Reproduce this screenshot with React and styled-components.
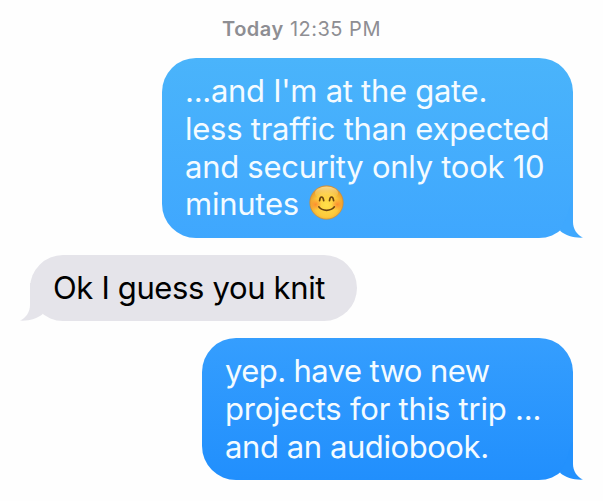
import React from 'react';
import styled, { createGlobalStyle } from 'styled-components';

const GlobalStyle = createGlobalStyle`
  body {
    margin: 0;
    background: #fefefe;
    font-family: Inter, 'Liberation Sans', sans-serif;
  }
`;

const Conversation = styled.main`
  display: flex;
  flex-direction: column;
  box-sizing: border-box;
  width: 603px;
  height: 501px;
  padding: 17px 30px 0;
  overflow: hidden;
`;

const Timestamp = styled.div`
  align-self: center;
  height: 41px;
  line-height: 25px;
  font-size: 20px;
  letter-spacing: 0.5px;
  color: #8e8e93;
`;

const Day = styled.span`
  font-weight: 600;
`;

const Bubble = styled.div`
  position: relative;
  box-sizing: border-box;
  align-self: ${props => (props.$sent ? 'flex-end' : 'flex-start')};
  width: ${props => props.$width}px;
  height: ${props => props.$height}px;
  margin-bottom: 17px;
  padding: 14px 0 0 23px;
  border-radius: 34px;
  background: ${props => props.$fill};
  color: ${props => (props.$sent ? '#f4fbff' : '#000')};
`;

const Line = styled.div`
  height: 37.8px;
  line-height: 37.8px;
  font-size: 31px;
  letter-spacing: ${props => props.$spacing || 0}px;
  font-variant-ligatures: none;
  white-space: nowrap;
`;

const TailShape = styled.svg`
  position: absolute;
  bottom: 0;
  ${props => (props.$sent ? 'right: -10px;' : 'left: -10px; transform: scaleX(-1);')}
`;

const Smiley = styled.svg`
  vertical-align: -5px;
  margin-left: 2px;
`;

const Tail = ({ sent, color }) => (
  <TailShape $sent={sent} width="30" height="40" viewBox="0 0 30 40">
    <path d="M14 18L19 2H20V24C20 31 24 37 30 39.6C21 40 13 38 7 32.8Z" fill={color} />
  </TailShape>
);

const BlushEmoji = () => (
  <Smiley width="35" height="35" viewBox="0 0 35 35">
    <defs>
      <radialGradient id="face" cx="50%" cy="58%" r="54%">
        <stop offset="0" stopColor="#ffe04a" />
        <stop offset="0.65" stopColor="#fdc93b" />
        <stop offset="1" stopColor="#e79a2b" />
      </radialGradient>
      <radialGradient id="cheek">
        <stop offset="0" stopColor="#fb7b2c" stopOpacity="0.75" />
        <stop offset="1" stopColor="#fb7b2c" stopOpacity="0" />
      </radialGradient>
      <linearGradient id="shine" x1="0" y1="0" x2="0" y2="1">
        <stop offset="0" stopColor="#fff0b0" stopOpacity="0.75" />
        <stop offset="1" stopColor="#ffd95a" stopOpacity="0" />
      </linearGradient>
    </defs>
    <circle cx="17.5" cy="17.5" r="16.7" fill="url(#face)" stroke="#c98a3c" strokeWidth="0.7" />
    <ellipse cx="17.5" cy="8" rx="11.5" ry="6.5" fill="url(#shine)" />
    <circle cx="6.6" cy="19.5" r="6" fill="url(#cheek)" />
    <circle cx="28.4" cy="19.5" r="6" fill="url(#cheek)" />
    <g fill="none" stroke="#6b4310" strokeLinecap="round">
      <path d="M10.6 15.6C11.1 10.8 14 10.8 14.7 15.6" strokeWidth="1.7" />
      <path d="M20.5 15.6C21.1 10.8 24 10.8 24.6 15.6" strokeWidth="1.7" />
      <path d="M9.8 21.8C13.5 26.5 21.7 26.5 25.4 21.8" strokeWidth="1.6" />
    </g>
  </Smiley>
);

const App = () => (
  <>
    <GlobalStyle />
    <Conversation>
      <Timestamp>
        <Day>Today</Day> 12:35 PM
      </Timestamp>
      <Bubble $sent $width={411} $height={180} $fill="linear-gradient(#4ab4fb, #3fa7fe)">
        <Line $spacing={-0.28}>...and I'm at the gate.</Line>
        <Line $spacing={-0.25}>less traffic than expected</Line>
        <Line $spacing={-0.27}>and security only took 10</Line>
        <Line $spacing={-0.25}>
          minutes <BlushEmoji />
        </Line>
        <Tail sent color="#3fa8fe" />
      </Bubble>
      <Bubble $width={327} $height={66} $fill="#e5e4ea">
        <Line $spacing={-0.35}>Ok I guess you knit</Line>
        <Tail color="#e5e4ea" />
      </Bubble>
      <Bubble $sent $width={371} $height={142} $fill="linear-gradient(#359efe, #218ffd)">
        <Line $spacing={-0.58}>yep. have two new</Line>
        <Line $spacing={-0.22}>projects for this trip ...</Line>
        <Line $spacing={-0.42}>and an audiobook.</Line>
        <Tail sent color="#2391fd" />
      </Bubble>
    </Conversation>
  </>
);

export default App;
